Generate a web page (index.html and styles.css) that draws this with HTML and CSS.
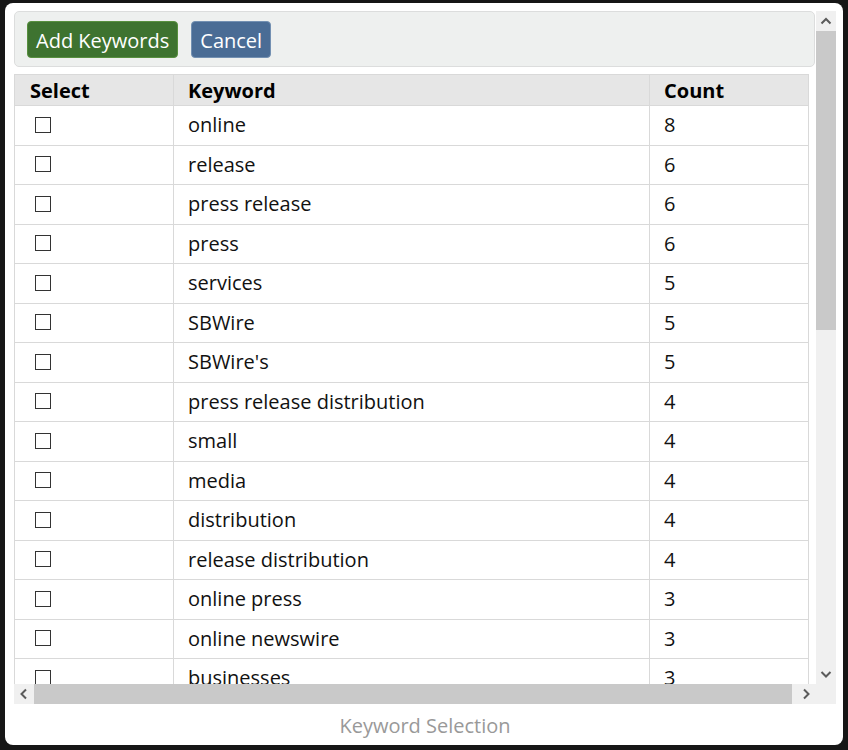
FILE: index.html
```html
<!DOCTYPE html>
<html lang="en">
<head>
<meta charset="utf-8">
<title>Keyword Selection</title>
<link rel="stylesheet" href="styles.css">
</head>
<body>
<div class="dialog">
  <div class="scroller">
    <div class="viewport">
      <div class="toolbar">
        <button class="btn btn-add" type="button">Add Keywords</button>
        <button class="btn btn-cancel" type="button">Cancel</button>
      </div>
      <div class="table-wrap">
        <table class="kw-table">
          <colgroup>
            <col class="col-select">
            <col class="col-keyword">
            <col class="col-count">
          </colgroup>
          <thead>
            <tr><th>Select</th><th>Keyword</th><th>Count</th></tr>
          </thead>
          <tbody>
            <tr><td><span class="box"></span></td><td>online</td><td>8</td></tr>
            <tr><td><span class="box"></span></td><td>release</td><td>6</td></tr>
            <tr><td><span class="box"></span></td><td>press release</td><td>6</td></tr>
            <tr><td><span class="box"></span></td><td>press</td><td>6</td></tr>
            <tr><td><span class="box"></span></td><td>services</td><td>5</td></tr>
            <tr><td><span class="box"></span></td><td>SBWire</td><td>5</td></tr>
            <tr><td><span class="box"></span></td><td>SBWire's</td><td>5</td></tr>
            <tr><td><span class="box"></span></td><td>press release distribution</td><td>4</td></tr>
            <tr><td><span class="box"></span></td><td>small</td><td>4</td></tr>
            <tr><td><span class="box"></span></td><td>media</td><td>4</td></tr>
            <tr><td><span class="box"></span></td><td>distribution</td><td>4</td></tr>
            <tr><td><span class="box"></span></td><td>release distribution</td><td>4</td></tr>
            <tr><td><span class="box"></span></td><td>online press</td><td>3</td></tr>
            <tr><td><span class="box"></span></td><td>online newswire</td><td>3</td></tr>
            <tr><td><span class="box"></span></td><td>businesses</td><td>3</td></tr>
            <tr><td><span class="box"></span></td><td>newswire</td><td>3</td></tr>
          </tbody>
        </table>
      </div>
    </div>
    <div class="vbar">
      <div class="sb-btn"><svg width="20" height="20" viewBox="0 0 20 20"><polyline points="5.5,12.5 10,8 14.5,12.5" fill="none" stroke="#5b5b5b" stroke-width="2"/></svg></div>
      <div class="vthumb"></div>
      <div class="sb-fill"></div>
      <div class="sb-btn"><svg width="20" height="20" viewBox="0 0 20 20"><polyline points="5.5,8 10,12.5 14.5,8" fill="none" stroke="#5b5b5b" stroke-width="2"/></svg></div>
    </div>
    <div class="hbar">
      <div class="sb-btn"><svg width="20" height="20" viewBox="0 0 20 20"><polyline points="12,5.5 7.5,10 12,14.5" fill="none" stroke="#5b5b5b" stroke-width="2"/></svg></div>
      <div class="hthumb"></div>
      <div class="sb-fill"></div>
      <div class="sb-btn"><svg width="20" height="20" viewBox="0 0 20 20"><polyline points="8,5.5 12.5,10 8,14.5" fill="none" stroke="#5b5b5b" stroke-width="2"/></svg></div>
    </div>
    <div class="corner"></div>
  </div>
  <div class="title">Keyword Selection</div>
</div>
</body>
</html>
```
FILE: styles.css
```css
html, body {
  margin: 0;
  padding: 0;
}
body {
  background: #161616;
  width: 848px;
  height: 750px;
  overflow: hidden;
  font-family: "Open Sans", "DejaVu Sans", sans-serif;
}
.dialog {
  margin: 3px 5px 0 5px;
  width: 838px;
  height: 742px;
  box-sizing: border-box;
  background: #fff;
  border-radius: 8px;
  padding: 8px 7px 0 9px;
  display: flex;
  flex-direction: column;
}
.scroller {
  display: grid;
  grid-template-columns: 802px 20px;
  grid-template-rows: 673px 20px;
  flex: none;
}
.viewport {
  overflow: hidden;
  min-width: 0;
  min-height: 0;
}
.toolbar {
  width: 801px;
  height: 56px;
  box-sizing: border-box;
  border: 1px solid #dcdddd;
  border-radius: 5px;
  background: #eef0ef;
  padding: 9px 12px;
  display: flex;
  gap: 13px;
  margin-bottom: 7px;
}
.btn {
  font-family: "Open Sans", sans-serif;
  font-size: 20px;
  line-height: 27px;
  height: 37px;
  padding: 5px 8px 3px;
  border: 1px solid;
  border-radius: 4px;
  color: #fff;
  margin: 0;
}
.btn-add {
  background: #3e7330;
  border-color: #58903f;
}
.btn-cancel {
  background: #4a6c95;
  border-color: #7390b2;
}
.table-wrap {
  width: 801px;
}
.kw-table {
  border-collapse: collapse;
  table-layout: fixed;
  width: 794px;
  font-size: 20px;
  color: #111;
}
.col-select { width: 159px; }
.col-keyword { width: 476px; }
.col-count { width: 159px; }
.kw-table th {
  background: #e6e6e6;
  font-weight: 700;
  text-align: left;
  padding: 1px 14px 0;
  height: 29px;
  line-height: 29px;
  border: 1px solid #d9d9d9;
  color: #000;
}
.kw-table td {
  padding: 4px 14px;
  line-height: 30.5px;
  border: 1px solid #d9d9d9;
  white-space: nowrap;
}
.kw-table th:first-child,
.kw-table td:first-child {
  padding-left: 15px;
}
.box {
  display: inline-block;
  width: 14px;
  height: 14px;
  border: 1px solid #333;
  vertical-align: middle;
  margin-left: 5px;
  position: relative;
  top: -2px;
}
.vbar {
  background: #f0f0f0;
  display: flex;
  flex-direction: column;
}
.hbar {
  background: #f0f0f0;
  display: flex;
}
.sb-btn {
  width: 20px;
  height: 20px;
  flex: none;
}
.sb-btn svg {
  display: block;
}
.sb-fill {
  flex: 1;
}
.vthumb {
  height: 299px;
  background: #c9c9c9;
  flex: none;
}
.hthumb {
  width: 758px;
  background: #c9c9c9;
  flex: none;
}
.corner {
  background: #f0f0f0;
}
.title {
  flex: 1;
  display: flex;
  align-items: center;
  justify-content: center;
  color: #999;
  font-size: 20px;
  padding-top: 2px;
}
```
